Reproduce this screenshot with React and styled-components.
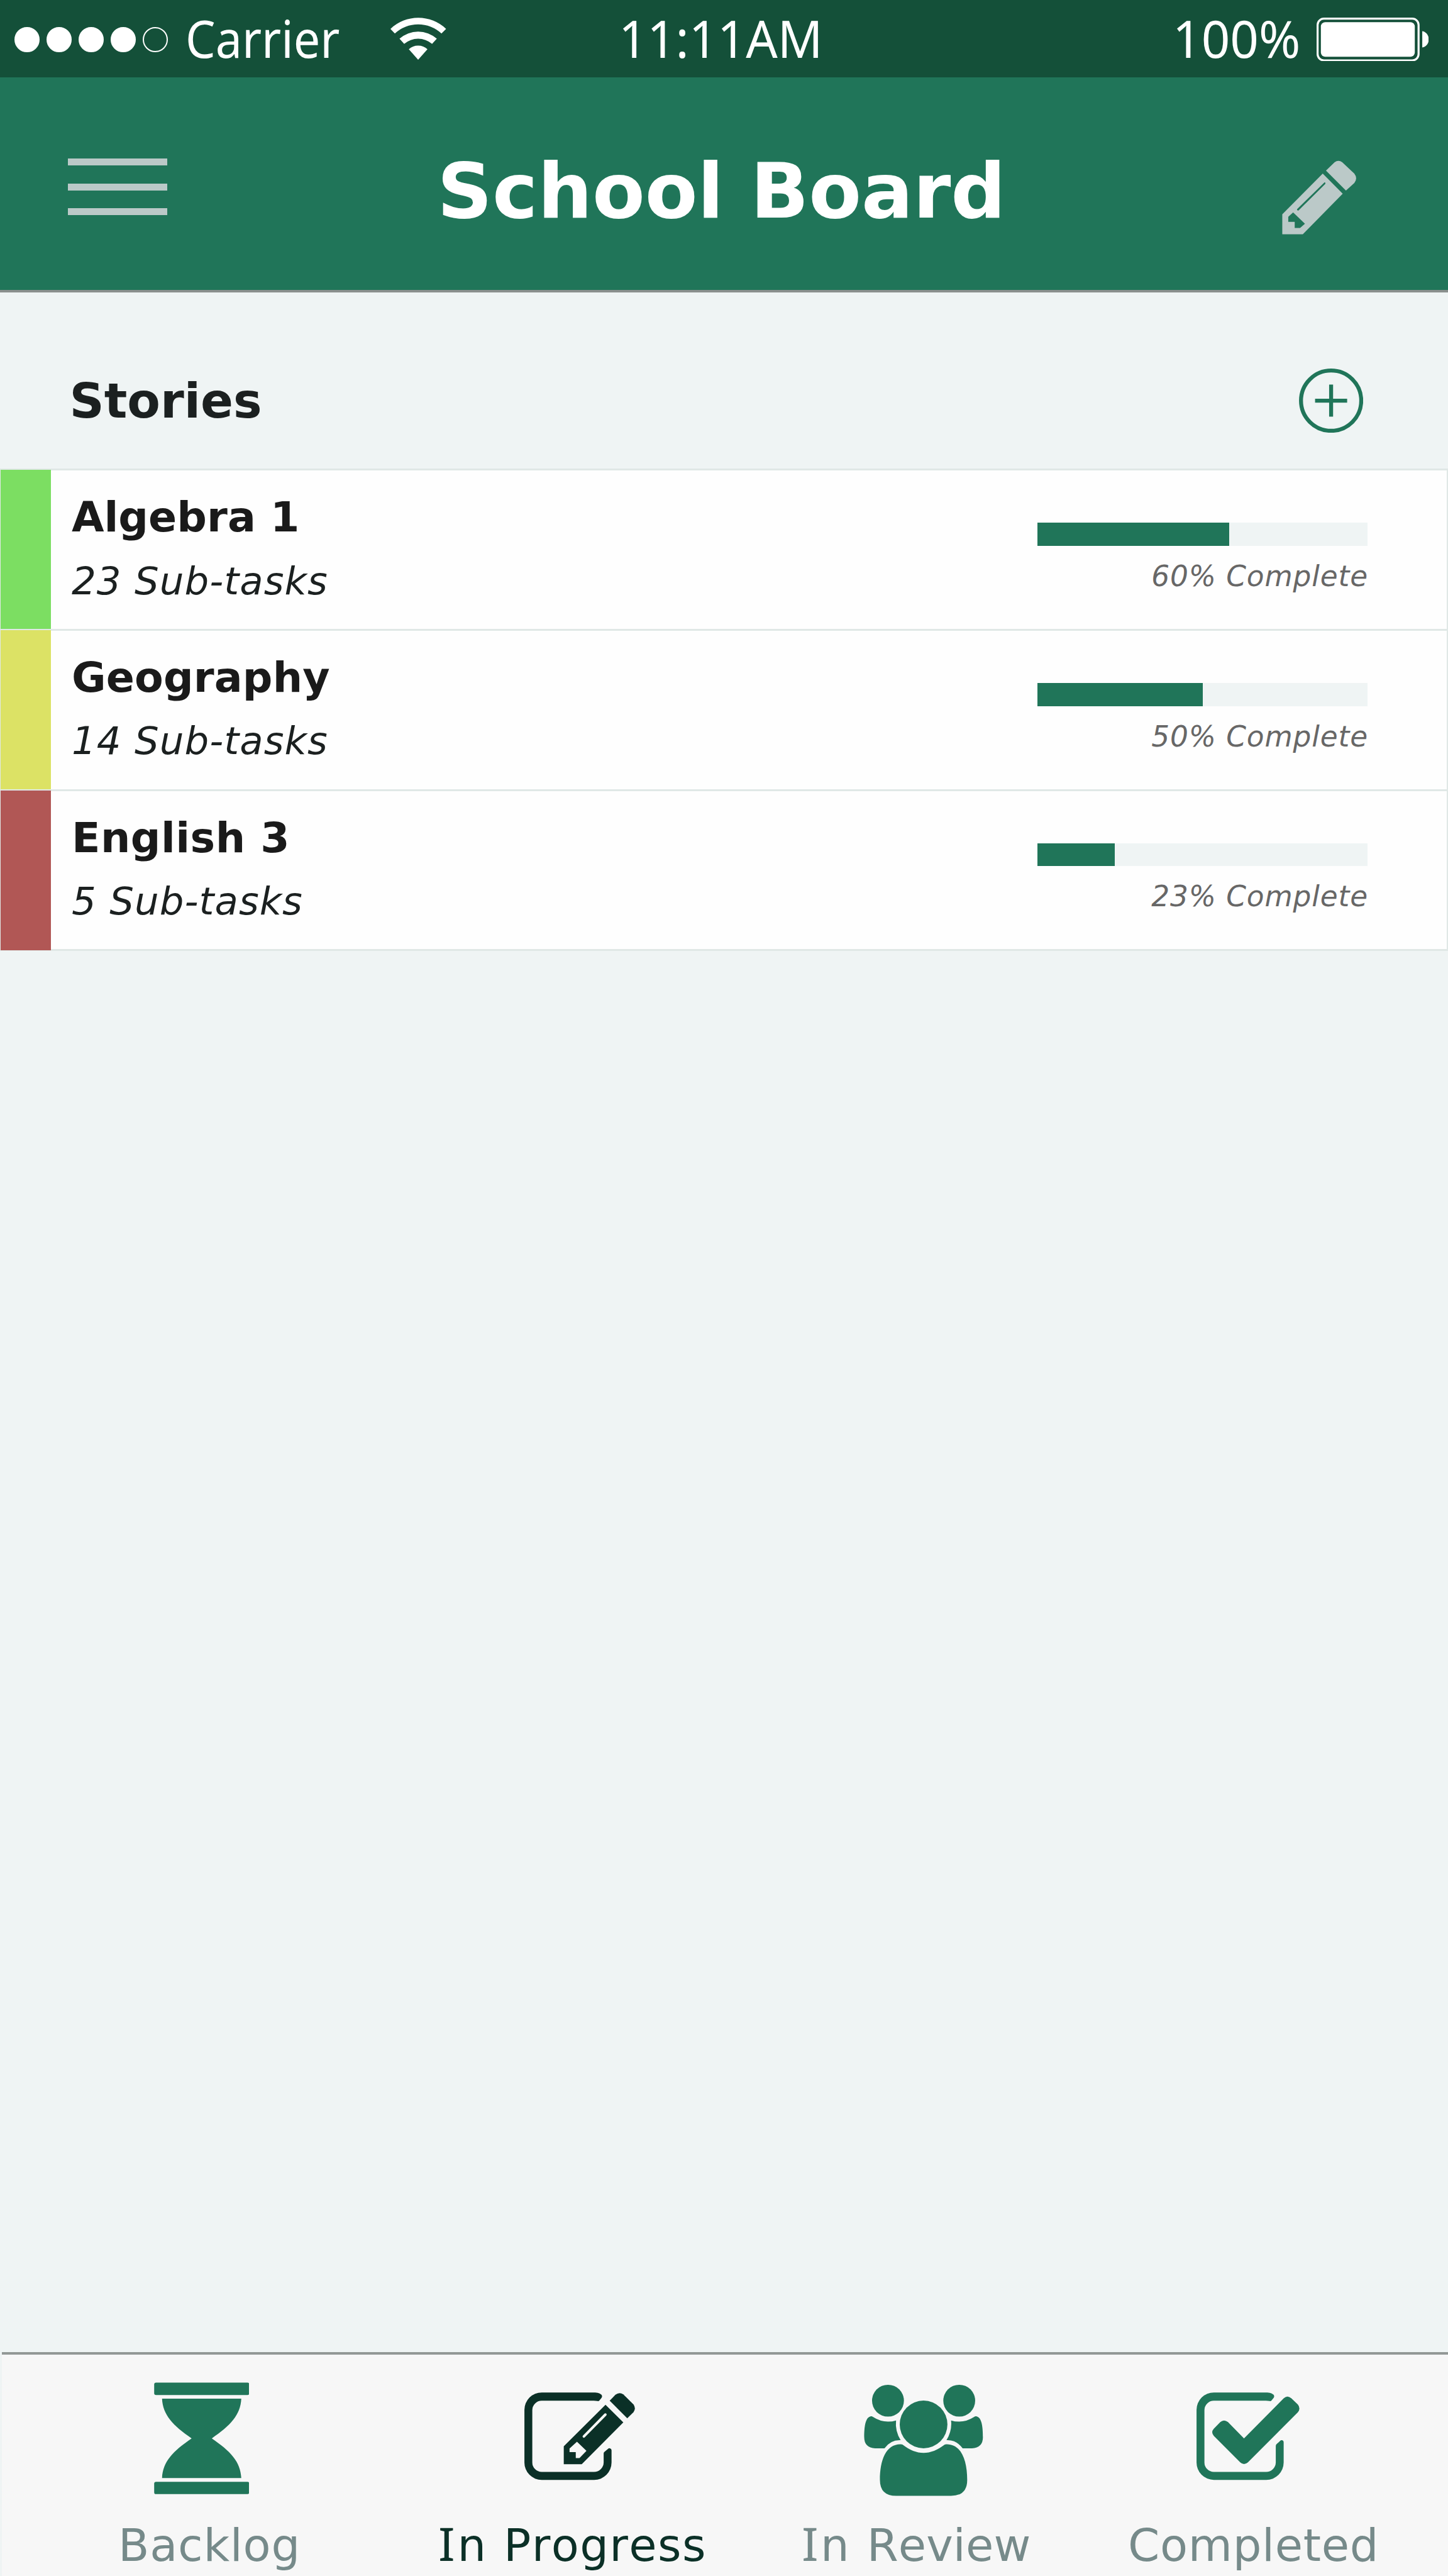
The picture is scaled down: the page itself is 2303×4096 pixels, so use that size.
import React from "react";
import styled, { createGlobalStyle } from "styled-components";

const color = {
  status: "#145039",
  brand: "#207559",
  active: "#0b3027",
  muted: "#768a8a",
  header: "#bbc9c8",
  page: "#eff4f4",
  line: "#e0e8e6",
  rule: "#929896",
};

const GlobalStyle = createGlobalStyle`
  body {
    margin: 0;
    background: ${color.page};
    font-family: "DejaVu Sans", Verdana, sans-serif;
  }
`;

const Screen = styled.div`
  display: flex;
  flex-direction: column;
  width: 2303px;
  height: 4096px;
  overflow: hidden;
  background: ${color.page};
`;

/* ---------- status bar ---------- */

const StatusBar = styled.div`
  display: flex;
  flex: none;
  align-items: flex-start;
  height: 123px;
  box-sizing: border-box;
  padding: 0 31px 0 22.7px;
  background: ${color.status};
  color: #fff;
`;

const Signal = styled.div`
  display: flex;
  flex: none;
  gap: 11.1px;
  margin-top: 42.5px;
`;

const Dot = styled.span`
  box-sizing: border-box;
  width: 40px;
  height: 40px;
  border: 2px solid #fff;
  border-radius: 50%;
  background: ${(p) => (p.$on ? "#fff" : "transparent")};
`;

const StatusText = styled.span`
  flex: none;
  width: ${(p) => p.$width}px;
  margin-left: ${(p) => p.$gap};
  font: 82.6px/120px "Noto Sans", "Open Sans", sans-serif;
  white-space: nowrap;
  transform: scaleX(${(p) => p.$squeeze});
  transform-origin: left;
`;

const WifiIcon = styled.svg`
  flex: none;
  width: 88.5px;
  height: 67.1px;
  margin: 27.8px 0 0 58px;
  fill: #fff;
`;

const BatteryIcon = styled.svg`
  flex: none;
  width: 178.5px;
  height: 69.6px;
  margin: 27.9px 0 0 17.7px;
`;

/* ---------- header ---------- */

const Header = styled.header`
  display: flex;
  flex: none;
  align-items: center;
  height: 342px;
  box-sizing: border-box;
  padding: 0 145.6px 0 107.6px;
  border-bottom: 4px solid #8a908e;
  background: ${color.brand};
`;

const Menu = styled.div`
  display: flex;
  flex: none;
  flex-direction: column;
  gap: 28.2px;
  width: 158.9px;
  margin-top: 10.6px;
`;

const MenuBar = styled.span`
  height: 11.3px;
  background: ${color.header};
`;

const Title = styled.h1`
  margin: 24px 0 0 428.8px;
  color: #fff;
  font-size: 122px;
  font-weight: bold;
  line-height: 150px;
  letter-spacing: -0.12px;
  white-space: nowrap;
`;

const EditButton = styled.svg`
  flex: none;
  width: 118.3px;
  height: 118.3px;
  margin: 45px 0 0 auto;
  fill: ${color.header};
`;

/* ---------- stories ---------- */

const SectionHead = styled.div`
  display: flex;
  flex: none;
  align-items: center;
  justify-content: space-between;
  height: 280px;
  box-sizing: border-box;
  padding: 66px 135.2px 0 110.6px;
`;

const SectionTitle = styled.h2`
  margin: 0;
  color: #1b2020;
  font-size: 76.6px;
  line-height: 90px;
`;

const AddIcon = styled.svg`
  width: 102.2px;
  height: 102.2px;
  margin-top: -2px;
  fill: none;
  stroke: ${color.brand};
  stroke-width: 6.3;
`;

const List = styled.div`
  flex: none;
  border-bottom: 3px solid ${color.line};
`;

const Row = styled.div`
  display: flex;
  height: 254.8px;
  box-sizing: border-box;
  padding-right: 125.9px;
  border: 0 solid ${color.line};
  border-width: 3px 2px 0 1px;
  background: #fefefe;
`;

const Tag = styled.span`
  flex: none;
  width: 80px;
  margin: -1px 0 ${(p) => (p.$last ? "-2px" : "0")};
  background: ${(p) => p.$color};
`;

const Story = styled.div`
  flex: 1;
  padding: 34px 0 0 32.9px;
`;

const StoryName = styled.div`
  color: #1a1a1a;
  font-size: 66.6px;
  font-weight: bold;
  line-height: 80px;
  letter-spacing: ${(p) => p.$tracking}px;
`;

const SubTasks = styled.div`
  margin-top: 21.5px;
  color: #1b2020;
  font-size: 61px;
  font-style: italic;
  line-height: 80px;
  letter-spacing: 1.05px;
`;

const Progress = styled.div`
  flex: none;
  width: 524.7px;
  padding-top: 83px;
`;

const Track = styled.div`
  height: 36.8px;
  background: ${color.page};
`;

const Fill = styled.div`
  width: ${(p) => p.$value}%;
  height: 100%;
  background: ${color.brand};
`;

const ProgressText = styled.div`
  margin: 19px -1px 0 0;
  color: #676767;
  font-size: 45.4px;
  font-style: italic;
  line-height: 60px;
  letter-spacing: 0.9px;
  text-align: right;
  white-space: nowrap;
`;

/* ---------- tab bar ---------- */

const TabBar = styled.nav`
  display: flex;
  flex: none;
  height: 356px;
  box-sizing: border-box;
  margin: auto 0 0 3px;
  padding: 42.5px 0 0 185px;
  border-top: 4px solid ${color.rule};
  background: #f7f7f7;
`;

const Tab = styled.div`
  flex: none;
  width: ${(p) => p.$width}px;
  color: ${(p) => (p.$active ? color.active : color.muted)};
`;

const TabIcon = styled.svg`
  display: block;
  width: ${(p) => p.$width}px;
  height: 182.8px;
  margin-left: ${(p) => p.$indent}px;
  fill: ${(p) => (p.$active ? color.active : color.brand)};
`;

const TabLabel = styled.div`
  margin-top: 32.7px;
  font-size: 72px;
  font-kerning: none;
  line-height: 90px;
  letter-spacing: ${(p) => p.$tracking}px;
  word-spacing: ${(p) => p.$space || 0}px;
  white-space: nowrap;
`;

/* Capital I with slab serifs */
const SlabI = styled.span`
  display: inline-block;
  margin: 0 5.2px 0 -0.7px;
  font-family: "Noto Sans", sans-serif;
  font-size: 73.5px;
  line-height: 0;
  letter-spacing: 0;
  transform: scaleX(1.07);
  transform-origin: left;
`;

const stories = [
  { name: "Algebra 1", tracking: 0.05, tasks: "23 Sub-tasks", label: "60% Complete", value: 58.1, tag: "#7cde62" },
  { name: "Geography", tracking: 0.15, tasks: "14 Sub-tasks", label: "50% Complete", value: 50, tag: "#dce265" },
  { name: "English 3", tracking: 0.5, tasks: "5 Sub-tasks", label: "23% Complete", value: 23.3, tag: "#b15755" },
];

const boxLeft =
  "H1281.7C1290 5161.3 1296 5163.5 1298.4 5166.2Q1300.8 5169.5 1298.5 5173L1293.5 5179Q1292 5180.5 1289.5 5179.8Q1286 5179 1281.7 5179H1169.6A20.5 20.5 0 0 0 1149.1 5199.5V5312.2A20.5 20.5 0 0 0 1169.6 5332.7H1281.7A21 21 0 0 0 1303.1 5312.2";

export default function App() {
  return (
    <>
      <GlobalStyle />
      <Screen>
        <StatusBar>
          <Signal>
            <Dot $on />
            <Dot $on />
            <Dot $on />
            <Dot $on />
            <Dot />
          </Signal>
          <StatusText $width={268.8} $gap="27.5px" $squeeze={0.913}>Carrier</StatusText>
          <WifiIcon viewBox="843 37.7 120 91">
            <path d="M843 62A87 87 0 0 1 963 62L953 71.8A74 74 0 0 0 852.5 71.8Z" />
            <path d="M862.5 83.3A60.5 60.5 0 0 1 943 83.3L932.8 94.3A46.7 46.7 0 0 0 872.6 94.3Z" />
            <path d="M882.6 105.7A30 30 0 0 1 922.8 105.7L902.7 128.6Z" />
          </WifiIcon>
          <StatusText $width={338.8} $gap="274.1px" $squeeze={0.958}>11:11AM</StatusText>
          <StatusText $width={210.4} $gap="auto" $squeeze={0.966}>100%</StatusText>
          <BatteryIcon viewBox="0 0 178.5 69.6">
            <rect x="1.6" y="1.6" width="160.6" height="66.4" rx="10" fill="none" stroke="#fff" strokeWidth="3.2" />
            <rect x="6.8" y="7.2" width="149.4" height="55" rx="7" fill="#fff" />
            <path d="M168.1 21.6C175 23 178.4 29 178.4 34.7S175 46 168.1 47.6Z" fill="#fff" />
          </BatteryIcon>
        </StatusBar>

        <Header>
          <Menu>
            <MenuBar />
            <MenuBar />
            <MenuBar />
          </Menu>
          <Title>School Board</Title>
          <EditButton viewBox="2767 347 160.5 160.5">
            <path
              fillRule="evenodd"
              d="M2854.9 375.5L2898 418.8L2811.9 506.5H2767.6V463.3ZM2858.6 394.6Q2861.2 394 2860.6 397.6L2802.5 455.2Q2798.5 455.5 2799.6 452.3ZM2791 459.2L2816.5 483.7L2806 492.7H2794.4V479.6H2780.5V468.6Z"
            />
            <path d="M2861.9 369L2880.5 351Q2888.7 344.8 2897 351L2923 375.5Q2931 385.7 2923 396L2905 412Z" />
          </EditButton>
        </Header>

        <SectionHead>
          <SectionTitle>Stories</SectionTitle>
          <AddIcon viewBox="0 0 102.2 102.2">
            <circle cx="51.1" cy="51.1" r="47.9" />
            <path d="M25.6 51.1H76.6M51.1 25.6V76.6" />
          </AddIcon>
        </SectionHead>

        <List>
          {stories.map((s, i) => (
            <Row key={s.name}>
              <Tag $color={s.tag} $last={i === stories.length - 1} />
              <Story>
                <StoryName $tracking={s.tracking}>{s.name}</StoryName>
                <SubTasks>{s.tasks}</SubTasks>
              </Story>
              <Progress>
                <Track>
                  <Fill $value={s.value} />
                </Track>
                <ProgressText>{s.label}</ProgressText>
              </Progress>
            </Row>
          ))}
        </List>

        <TabBar>
          <Tab $width={510}>
            <TabIcon $width={151.8} $indent={56.5} viewBox="331.7 5138 206 248">
              <rect x="332" y="5140" width="205.3" height="26.7" rx="4" />
              <rect x="332" y="5354" width="205.3" height="26.7" rx="4" />
              <path d="M349 5174.7H520C518.5 5210 496 5233 456.4 5260.3C496 5287.5 518.5 5310 520 5346H349C350.5 5310 373 5287.5 412.8 5260.3C373 5233 350.5 5210 349 5174.7Z" />
            </TabIcon>
            <TabLabel $tracking={0.76}>Backlog</TabLabel>
          </Tab>

          <Tab $width={577.5} $active>
            <TabIcon $active $width={176.9} $indent={136.2} viewBox="1132 5138 240 248">
              <path
                d={`M1169.6 5161.3${boxLeft}V5293Q1303.1 5291.5 1304.2 5290L1312.6 5282.8Q1314.5 5281.2 1316.4 5281.7Q1320.1 5282.5 1320.1 5286V5312.2A37.6 37.6 0 0 1 1282.5 5350H1169.6A37.5 37.5 0 0 1 1132.1 5312.2V5199A37.5 37.5 0 0 1 1169.6 5161.3Z`}
              />
              <path
                fillRule="evenodd"
                d="M1307.1 5187.7L1345.5 5226L1255.8 5316H1217V5277.3ZM1304.9 5207L1258.4 5254.2A2.6 2.6 0 0 0 1262.3 5258L1308.8 5210.8A2.6 2.6 0 0 0 1304.9 5207ZM1245.5 5267.7L1266 5287.3L1250.9 5303H1242.9V5290H1229.5V5282.3Z"
              />
              <path d="M1316.1 5179L1328.5 5166.3Q1336.8 5159.5 1345.5 5165.3L1367.5 5187.3Q1373.5 5196 1367.5 5203.7L1354 5217Z" />
            </TabIcon>
            <TabLabel $tracking={1.4} $space={2.2}>
              <SlabI>I</SlabI>n Progress
            </TabLabel>
          </Tab>

          <Tab $width={518.5}>
            <TabIcon $width={190.1} $indent={98.8} viewBox="1864.5 5138 258 248">
              <circle cx="1916.5" cy="5179" r="34.4" />
              <circle cx="2070.3" cy="5179" r="34.4" />
              <circle cx="1993.3" cy="5230.3" r="51.5" />
              <path d="M1884 5214Q1900 5224.3 1916.5 5224.3Q1926 5224.3 1933.9 5221.7Q1931.5 5244 1943.8 5264.3Q1923 5263 1908.9 5281.7H1888.8Q1865.2 5280 1865.2 5258C1865.2 5238 1867 5214 1880 5212.6Q1882 5212.4 1884 5214Z" />
              <path d="M2102.6 5214Q2086.6 5224.3 2070.1 5224.3Q2060.6 5224.3 2052.7 5221.7Q2055.1 5244 2042.8 5264.3Q2063.6 5263 2077.7 5281.7H2097.8Q2121.4 5280 2121.4 5258C2121.4 5238 2119.6 5214 2106.6 5212.6Q2104.6 5212.4 2102.6 5214Z" />
              <path d="M1947.8 5273.7C1963 5285.5 1978 5291.7 1993.3 5291.7S2023.6 5285.5 2039 5273.7Q2040 5273 2043 5273C2075 5273 2087.5 5308 2087.5 5350Q2087.5 5384.3 2052.7 5384.3H1933.9Q1899.1 5384.3 1899.1 5350C1899.1 5308 1911.6 5273 1943.6 5273Q1946.8 5273 1947.8 5273.7Z" />
            </TabIcon>
            <TabLabel $tracking={0.1} $space={5}>
              <SlabI>I</SlabI>n Review
            </TabLabel>
          </Tab>

          <Tab $width={506}>
            <TabIcon $width={165} $indent={108.8} viewBox="1132 5138 223.9 248">
              <path
                d={`M1169.6 5161.3${boxLeft}V5277Q1303.1 5275 1304.2 5273.5L1312.6 5265.6Q1314.5 5263.8 1316.4 5264.3Q1320.1 5265 1320.1 5269V5312.2A37.6 37.6 0 0 1 1282.5 5350H1169.6A37.5 37.5 0 0 1 1132.1 5312.2V5199A37.5 37.5 0 0 1 1169.6 5161.3Z`}
              />
              <path d="M1234.5 5260.3L1320.1 5174Q1328.2 5166.5 1336.8 5174L1350.7 5187.3Q1357.5 5196 1350.7 5204L1243 5312Q1234.5 5319.5 1226.3 5312L1169.4 5255Q1162.5 5247 1169.4 5239.5L1183.3 5225.3Q1191.4 5218 1200 5225.3Z" />
            </TabIcon>
            <TabLabel $tracking={0.73}>Completed</TabLabel>
          </Tab>
        </TabBar>
      </Screen>
    </>
  );
}
